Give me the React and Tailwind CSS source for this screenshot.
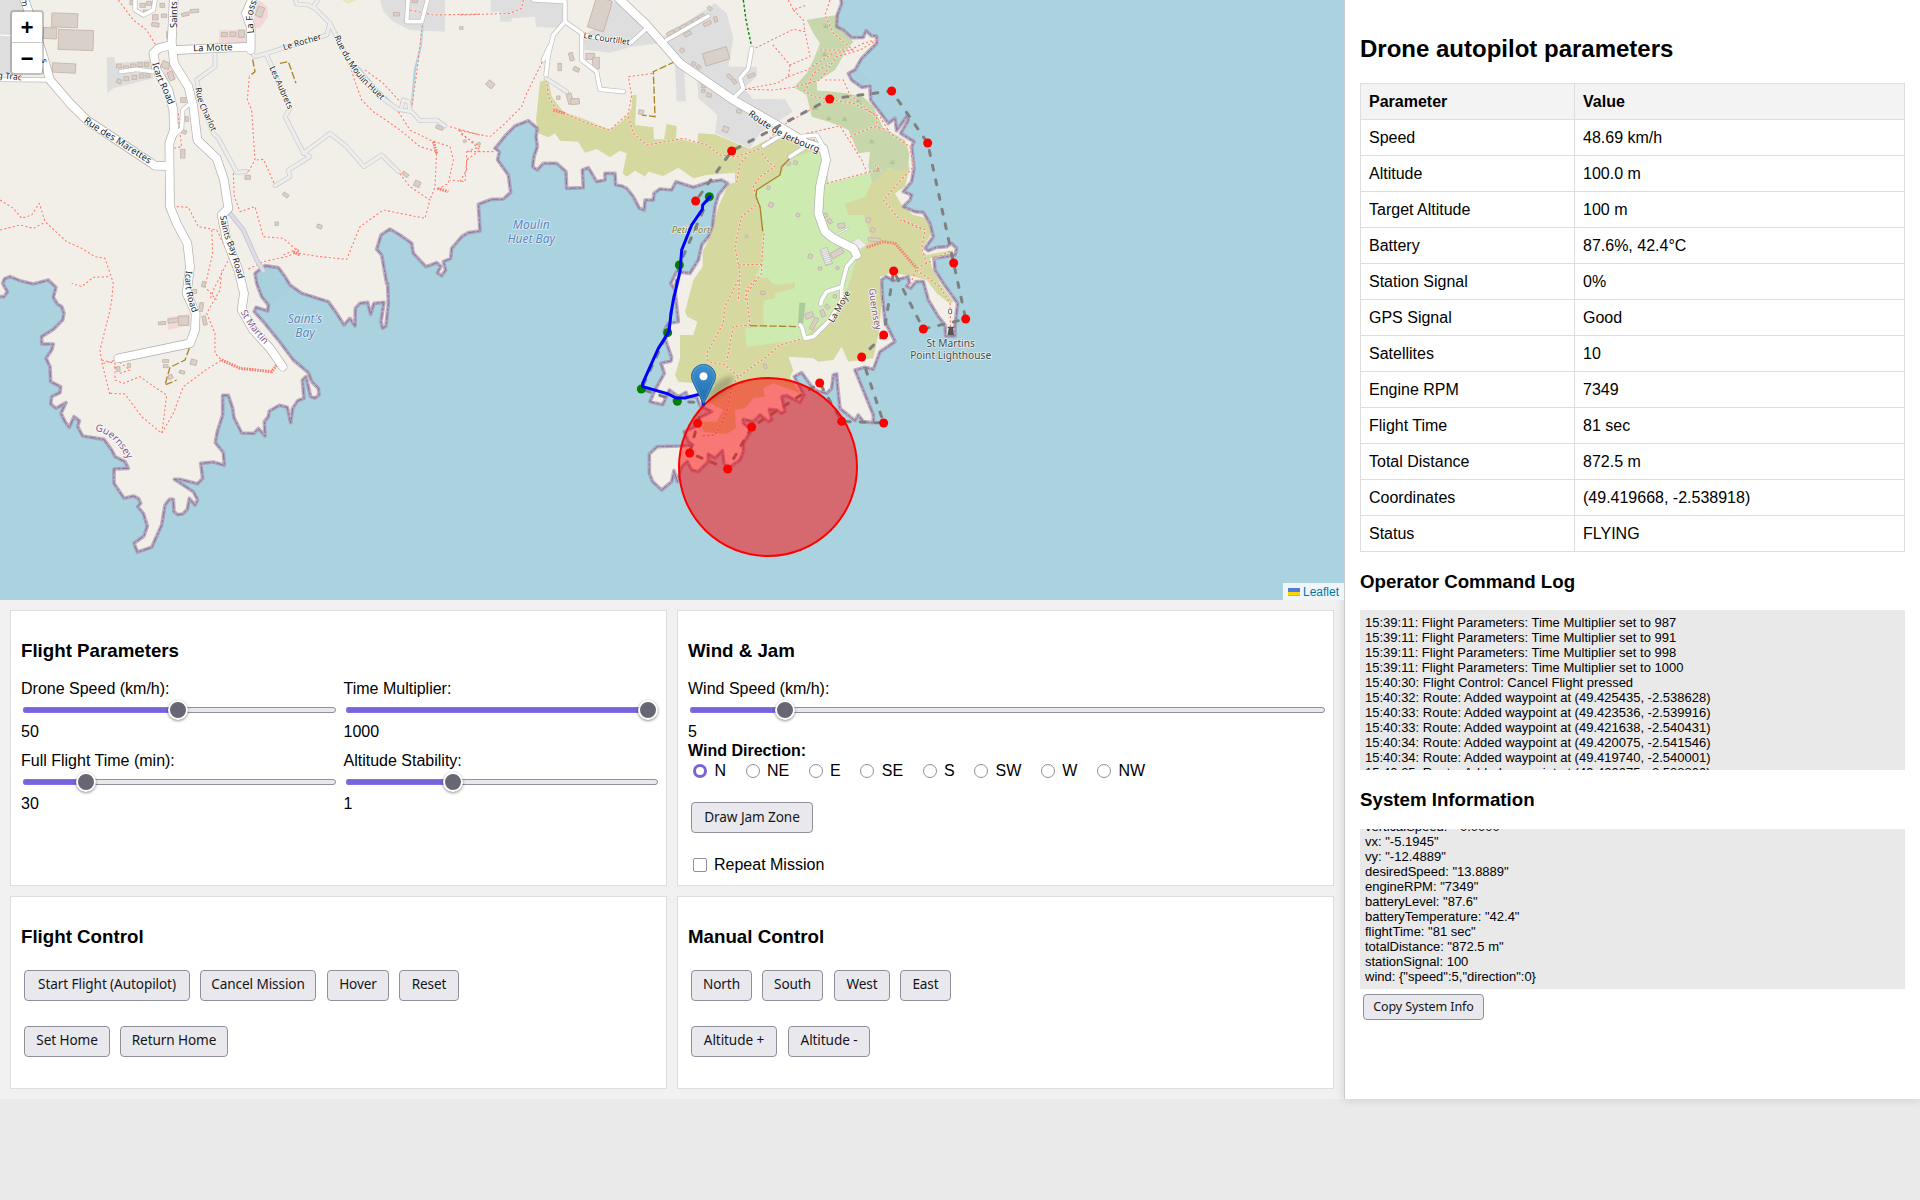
import React from "react";

/* Map geometry is stored in units of a third of a pixel, per survey sheet, each sheet with its own origin. */
const SHEETS = { a: [0, 0], b: [0, 810], c: [1380, 0], d: [1800, 840], e: [2340, 0] };

const toPoints = (src) => {
  const out = [];
  let o = SHEETS.a;
  src
    .trim()
    .split(/\s+/)
    .forEach((t) => {
      if (SHEETS[t]) {
        o = SHEETS[t];
        return;
      }
      const [x, y] = t.split(",").map(Number);
      out.push([x + o[0], y + o[1]]);
    });
  return out;
};
const line = (src) => "M" + toPoints(src).map((p) => p.join(" ")).join("L");
const area = (src) => line(src) + "Z";

const COAST = `b -20,80 12,80 22,65 8,40 14,26 30,20 60,32 100,42 145,30 168,52 160,82 172,102 185,110 192,130 188,150 160,178 125,200 125,222 160,222 155,240 138,265 150,290 152,335 182,350 180,368 155,380 152,402 168,415 198,398 183,430 195,455 208,472 222,440 238,452 233,470 248,498 312,508 335,540 345,560 375,575 385,595 342,597 342,640 372,685 400,678 415,685 422,700 413,710 430,730 442,768 432,798 402,820 412,846 455,832 485,765 495,705 508,688 520,688 522,725 533,734 548,732 562,718 568,685 585,705 593,690 580,665 523,628 540,628 593,641 608,625 602,580 640,576 673,586 670,548 646,518 652,485 668,435 668,376 685,376 698,415 702,443 725,489 762,490 775,475 795,498 793,455 805,440 808,423 838,406 862,412 872,458 878,415 893,392 912,385 907,330 918,320 932,380 945,384 957,375 955,355 935,335 925,308 880,270 835,210 790,155 763,125 768,112 803,123 805,105 785,80 770,40
a 765,820 795,797 835,803 855,830 870,855 b 905,70 985,95 1010,130 1032,165 1050,145 1065,168 1066,115 1080,100 1103,97 1112,133 1122,100 1152,97 1143,155 1148,175 1158,168 1165,100 1163,40
a 1160,850 1145,765 1130,748 1143,705 1170,687 1200,705 1235,730 1240,760 1278,800 1310,788 1323,800 1312,818 1325,827 1337,810 1330,785 1352,775 1355,745 1385,710
c 25,698 60,693 55,613 95,598 130,597 152,577 145,525 113,480 118,455 105,445 138,405 165,378 205,362 232,385 228,410 232,440 222,470 218,500 232,510 250,490 290,490 318,515 320,565 370,563 367,510 385,503 410,545 435,540 435,520 465,520 467,555 485,558 500,565 520,590 538,625 553,630 555,600 580,600 582,580 600,567 635,570 648,545 700,562 750,545 785,540 803,550 775,585 765,620 757,680 745,710 725,735 715,780 690,820 650,815 632,850
d 225,30 235,125 205,130 193,150 198,185 215,232 213,243 183,250 193,280 165,330 150,365 188,374 208,330 235,350 258,337 262,350 290,350 300,378 335,395 300,412 285,440 252,455 265,485 278,495 240,498 172,500 148,522 148,580 158,605 185,630 215,605 222,572 232,605 245,560 262,545 275,570 295,575 325,545 325,522 345,535 367,512 372,550 385,565 420,540 430,515 430,490 455,450 430,430 430,418 460,425 480,405 505,425 515,420 508,388 530,390 545,400 555,395 545,350 560,347 600,368 612,345 583,290 605,278 635,320 650,332 680,340 695,325 700,285 710,282 713,320 720,385 765,422 775,405 790,425 820,428 820,405 765,270 795,262 820,268 840,215 885,185 855,125 848,55
e 308,900 305,840 318,830 340,842 385,830 388,850 380,858 392,865 408,845 430,845 445,900 475,950 495,975 497,1008 525,1008 525,975 533,910 490,850 465,810 462,775 525,765 530,745 515,730 500,740 470,742 445,752 435,745 460,710 450,670 430,637 405,635 370,620 390,600 395,585 370,575 395,545 402,505 395,440 402,425 362,400 385,360 380,350 350,392 345,355 325,370 310,350 272,300 270,258 245,262 215,240 205,220 225,210 245,175 290,130 290,108 275,108 258,92 250,112 215,113 190,90 170,80 172,45 185,10 180,-20 a -20,-20`;

const HEATH = [
  `c 240,245 265,238 275,290 310,335 380,360 450,390 490,360 515,325 515,285 530,285 525,375 580,382 582,418 612,418 620,372 650,378 648,415 712,428 715,400 765,403 870,447 960,398 1040,440 1085,455 1140,560 1235,545
   e 280,540 325,505 350,515 390,500 375,560 345,580 365,615 400,645 440,655 455,700 425,750 440,765 520,750 515,762 450,775 455,800 480,850 520,905 510,912 470,880 440,840 385,826 330,820 300,830
   d 845,60 838,150 820,235 745,245 725,200 700,240 655,245 640,235 565,230 580,270 570,290 600,340 520,310 490,325 495,350 460,355 435,385 405,390 408,445 380,462 310,455 305,425 350,425 370,390 330,370 310,350 345,315 235,305 225,285 240,235 240,165 280,165 292,125 262,110 255,95 280,0
   c 728,800 728,755 745,720 775,620 805,552 825,548 825,518 740,525 700,535 655,503 610,528 565,515 555,530 525,512 500,530 488,520 500,460 480,452 450,472 410,447 375,458 355,425 300,422 285,400 265,412 235,400 228,360`,
];
const GOLF = `c 1050,455 1085,455 1105,550 1230,515 1235,545 1215,590 1155,612 1165,645 1210,645 1235,715 1200,755 1190,775 1165,860 d 680,120 600,180 440,200 435,145 490,138 490,62 525,55 527,12 c 935,850 925,835 885,830 910,780 912,700 895,610 890,570 960,525 985,480`;
const SCRUB = `e 80,60 170,45 175,80 220,125 200,150 165,210 110,245 112,270 200,280 250,290 280,320 310,385 375,420 388,460 385,505 350,515 325,505 290,540 275,545 265,500 270,455 235,460 205,390 185,380 145,365 95,350 80,285 42,262 80,220 100,180 120,130 100,100`;
const RESIDENTIAL = [
  `0,0 75,0 90,35 130,160 125,215 0,225`,
  `320,172 345,172 345,190 450,180 460,235 340,265 322,280`,
  `1140,0 1335,0 1335,95 1230,90 1180,65 1150,35`,
  `c 92,0 305,0 310,60 300,85 228,80 225,50 155,55 155,65 120,65 120,35 92,35`,
  `c 370,105 400,90 460,10 475,0 600,130 515,140 450,158 375,150`,
  `c 610,110 765,10 800,40 820,115 805,200 890,200 892,228 850,265 880,297 975,298 998,335 900,400 870,445 765,400 772,345 715,295 712,235 650,180`,
  `c 645,190 672,200 678,303 650,305`,
];
const PINK = [`658,90 740,90 740,130 658,130`, `765,0 785,5 802,22 804,50 780,85 762,85`, `b 502,142 570,132 570,165 504,180`, `487,205 510,190 530,235 500,240`];

const MAIN_ROADS = [
  `522,-20 515,130 522,190 565,260 580,320 592,420 650,475 672,540 685,625 665,645 680,720 715,810 732,880 725,930 760,990 810,1045 848,1100`,
  `515,135 475,145 460,160 470,210 505,270 520,330 522,390 508,430 510,620 530,670 562,730 570,800 560,880 587,940 585,990 570,1030 355,1075`,
  `530,150 750,140`,
  `752,150 752,80 738,40 765,-20`,
  `70,-10 95,60 130,170 150,240 210,310 260,360 440,480 465,497 505,498`,
  `c 465,-15 560,75 660,190 820,300 950,375 1040,430 1090,445 1098,480 1080,560 1075,640 1095,695 1120,715 1180,745 1190,765`,
];
const SMALL_ROADS = [
  `-10,238 150,240`, `565,315 548,330 545,385 520,410`, `362,215 410,208 460,215`, `405,0 405,30 430,45 460,30 465,0`, `1225,-10 1220,65 1265,65 1285,-10`,
  `c 220,0 315,5 315,65 280,105 265,165 258,225`, `c 250,180 268,140`, `c 315,65 365,100 365,180 410,215 420,268 490,275`, `c 365,105 510,130 560,85`,
  `c 620,120 745,48`, `c 875,145 865,205 840,235 850,265 815,300`, `c 910,438 980,395`, `c 990,470 1045,435`, `c 1020,410 1070,405 1090,440`,
  `c 1190,765 1160,800 1145,860 1100,875 1085,900 1082,912`, `c 1145,860 1145,900 1110,960 1060,1010 1035,1015 1025,980 1020,975`,
];
const LANES = [
  `750,150 765,170 800,160 980,105 990,70 940,20 960,-10`, `885,-5 890,12 925,15 945,25`, `800,165 870,325 855,350 910,458 930,470 865,510 870,530 825,557`,
  `910,460 990,400 1040,440 1092,500 1145,465 1195,515`, `645,155 645,200 590,240 605,310 640,400 655,415 710,517 738,515`,
  `990,70 1010,110 1060,210 1140,290 1195,328 1235,335 1260,362 1310,360 1335,378`, `1205,320 1210,300 1225,305 1230,330`, `c 258,235 320,275`,
];
const PATHS = [
  `355,0 400,60 440,90 470,140`, `0,600 40,625 65,655 95,645 118,610 135,665 200,725 245,745 285,770 315,775 340,850 335,900 b 330,120 300,240 305,275 330,375`,
  `0,690 60,675 100,685 130,670`, `b 325,20 280,22 245,50 215,40`, `b 305,270 345,280 345,330 370,340 420,320 455,345 500,375 485,495`, `b 310,280 350,270 390,300 360,310 340,285`,
  `b 330,370 375,372 425,440 485,490 520,430 550,350 620,298 665,270 645,250 645,190 620,130 660,60 665,0`,
  `530,620 565,622 595,680 650,690 690,770 640,870 630,900`, `635,690 638,760 615,860 650,900`, `535,340 540,400 545,440 520,445`,
  `748,230 742,300 755,330 765,480 745,515 700,520 703,590 720,635 765,620 790,710 850,715 895,755 860,770 790,785 740,810`, `770,480 790,478 825,555`,
  `850,765 895,745 895,760 960,770 1040,778 1080,680 1150,630 1275,655 1290,600 1230,560 1195,515`, `1040,160 1060,230 1085,300 1120,335 1200,390 1260,440 1310,455 1305,560 1290,600`,
  `1095,210 1150,250 1205,310`, `1195,335 1230,390 1290,420 1350,440 1360,480 1345,550 1310,570`, `1350,380 1440,405`, `1375,390 1440,450 1400,480 1395,545 1350,540`,
  `1230,30 1300,45 1440,42`, `1270,50 1250,220 1235,320`,
  `c 0,45 150,40 185,25 190,0`, `c 0,392 90,410 130,375 185,320 200,280 250,180`, `c 260,240 265,290 290,330 370,365 450,390 505,340 515,285 505,230 580,220`,
  `c 505,350 520,400 560,435 670,415 740,435 780,465 830,470 905,445 960,380 1110,297`, `c 0,545 20,510 20,455 105,455`, `c 20,455 60,440 0,400`,
  `c 905,460 930,490 945,500 900,530 880,560 895,610 845,650 840,670 825,740 840,820 835,900`, `c 830,548 840,490 860,470`, `c 835,795 905,793 912,700`, `c 905,793 905,820 860,880 855,900`,
  `d 415,0 375,80 370,130 320,220 325,245 375,255 415,290 500,230 540,195 600,178`, `d 465,0 438,30 450,135 400,140 390,190 380,245`, `d 415,290 395,320 380,400 345,465 305,468`,
  `c 875,150 935,120 1000,88 1035,95 1050,170 990,195 935,130`, `c 990,195 985,230 950,250 850,268 940,270 1000,262 1080,240 1130,170 1200,150 1250,120`,
  `c 1110,0 1095,45 1120,100 1180,150`, `c 985,0 1000,30 1040,15`, `c 1000,30 1030,60 1035,95`, `c 985,230 1040,210 1120,160 1180,150`, `c 1040,265 1060,220 1110,190`,
  `c 1030,270 1060,290 1180,310 1260,350 1290,400 1350,440 1360,500 1270,600 1320,660 1390,690`, `e 370,660 435,690 425,745 440,790 515,750`, `e 410,810 480,860 510,910 512,1000`,
  `e 140,550 270,515 300,510 285,495`, `e 80,400 180,378 245,480 260,515`, `e 210,410 280,380 330,390`, `e 135,240 190,240 210,285 290,350 290,380`, `e 440,790 410,805 390,855`, `e 120,150 210,150 250,130 285,120`,
];
const STEPS = [`b 665,270 720,295 815,305 830,285`, `e 260,742 310,725 345,730 410,805`, `c 280,330 315,340`, `1300,425 1310,460`, `1312,565 1345,575`, `c 1035,422 1065,422`, `880,755 900,765`];
const TRACKS = [`c 645,185 580,215 585,350 545,345`, `d 450,137 600,140`, `b 568,235 555,270 510,292 495,345 530,330`, `840,190 865,185 888,250`, `758,178 765,215 748,228`];

const BUILDINGS = [
  ["a", 155, 40, 78, 42, 2], ["a", 130, 83, 40, 33, 3], ["a", 175, 90, 105, 60, 2], ["a", 157, 190, 70, 28, 3], ["a", 570, 28, 26, 10, -4], ["a", 545, 38, 22, 10, -12],
  ["a", 350, 192, 14, 12, 0], ["a", 370, 198, 16, 12, 0], ["a", 392, 192, 16, 12, 0], ["a", 414, 188, 14, 12, 0], ["a", 434, 188, 12, 12, 0], ["a", 372, 230, 14, 12, 0], ["a", 396, 226, 14, 12, 0], ["a", 418, 222, 14, 12, 0], ["a", 350, 238, 14, 12, 20], ["a", 438, 220, 12, 12, 0],
  ["a", 420, 10, 16, 12, 0], ["a", 440, 4, 14, 12, 0], ["a", 430, 30, 14, 12, 0], ["a", 458, 44, 16, 16, 0], ["a", 480, 10, 14, 12, 0], ["a", 455, 68, 22, 12, 10], ["a", 484, 42, 16, 10, 0], ["a", 500, 95, 12, 20, 0], ["a", 390, 2, 10, 12, 0],
  ["a", 664, 98, 18, 12, 0], ["a", 690, 96, 18, 14, 0], ["a", 715, 90, 18, 22, 0], ["a", 770, 20, 20, 30, 20], ["a", 485, 185, 24, 20, 20], ["a", 505, 215, 16, 26, -20], ["a", 542, 293, 16, 14, 0], ["a", 556, 350, 9, 14, 0], ["a", 545, 390, 14, 11, 20], ["a", 542, 448, 13, 26, 0],
  ["a", 735, 526, 16, 12, 0], ["a", 848, 580, 18, 10, 35], ["a", 825, 666, 10, 10, 0], ["a", 951, 674, 15, 11, 20], ["a", 1206, 518, 20, 10, 35], ["a", 1243, 543, 18, 17, 25], ["a", 1180, 38, 18, 10, 0], ["a", 1236, 0, 16, 8, 0], ["a", 1379, 80, 10, 8, 0], ["a", 1308, 378, 22, 10, 20], ["a", 606, 845, 10, 16, 15], ["a", 575, 868, 15, 12, 0],
  ["b", 475, 155, 22, 9, -5], ["b", 504, 145, 40, 12, -8], ["b", 536, 138, 30, 28, 0], ["b", 598, 98, 11, 26, 10], ["b", 608, 138, 11, 27, -12], ["b", 488, 269, 18, 8, 0], ["b", 490, 284, 14, 9, 0], ["b", 572, 269, 18, 16, 15], ["b", 538, 302, 16, 9, 15], ["b", 504, 315, 14, 12, -30], ["b", 350, 290, 10, 14, 0], ["b", 383, 280, 8, 12, 0],
  ["c", 395, -5, 50, 95, 17], ["c", 378, 160, 26, 18, 0], ["c", 398, 172, 20, 34, 0], ["c", 294, 190, 10, 22, 0], ["c", 328, 158, 12, 24, -15], ["c", 340, 202, 18, 12, 25], ["c", 290, 288, 10, 10, 0], ["c", 322, 280, 15, 32, -15], ["c", 332, 296, 26, 17, -5], ["c", 80, 244, 22, 18, 40],
  ["c", 620, 94, 22, 11, -30], ["c", 642, 84, 18, 12, -30], ["c", 660, 75, 18, 12, -30], ["c", 680, 65, 18, 12, -30], ["c", 698, 54, 18, 12, -30], ["c", 716, 44, 18, 12, -30], ["c", 742, 20, 14, 10, 45], ["c", 762, 50, 10, 16, -15], ["c", 730, 66, 24, 10, -25], ["c", 672, 96, 22, 11, -25], ["c", 660, 145, 12, 12, 35],
  ["c", 731, 150, 75, 38, -17], ["c", 695, 186, 12, 10, 35], ["c", 710, 196, 12, 10, 35], ["c", 800, 225, 18, 10, 40], ["c", 816, 240, 14, 10, 60], ["c", 863, 222, 22, 9, -25], ["c", 725, 254, 12, 9, 10], ["c", 725, 268, 10, 9, 10], ["c", 740, 280, 14, 11, 15], ["c", 788, 380, 17, 16, 20], ["c", 830, 328, 14, 11, 15], ["c", 536, 330, 15, 13, 10], ["c", 10, 420, 9, 7, -20], ["c", 52, 428, 9, 7, -20],
  ["c", 980, 486, 11, 10, 20], ["c", 1001, 483, 11, 10, 20], ["c", 921, 558, 9, 10, 20], ["c", 926, 608, 13, 13, 20], ["c", 1009, 640, 10, 10, 20], ["c", 1090, 640, 12, 12, -20], ["c", 1104, 656, 11, 15, -30], ["c", 1134, 670, 20, 14, -10], ["c", 1218, 654, 13, 13, 20], ["c", 1232, 684, 12, 12, 20], ["c", 1225, 714, 36, 10, 5], ["c", 1112, 750, 38, 18, -30], ["c", 1045, 763, 12, 12, 20], ["c", 1075, 801, 10, 9, 20], ["c", 1128, 800, 9, 8, 20], ["c", 856, 705, 8, 8, 20], ["c", 903, 874, 11, 9, 0],
  ["d", 616, 98, 24, 16, -20], ["d", 636, 112, 12, 38, 28], ["d", 662, 90, 12, 20, -20], ["d", 675, 75, 14, 10, 50], ["d", 700, 44, 10, 10, 20], ["d", 492, 252, 8, 14, -20], ["d", 483, 34, 12, 8, 0],
];

const LABELS = [
  { id: "l1", d: "M250 366L300 400L360 436L480 514", t: "Rue des Marettes", s: 28.5 },
  { id: "l2", d: "M580 154L720 150", t: "La Motte", s: 28.5 },
  { id: "l3", d: "M852 151L1000 107", t: "Le Rocher", s: 25.5 },
  { id: "l4", d: "M1003 110Q1030 180 1085 245L1160 316", t: "Rue du Moulin Huet", s: 25.5 },
  { id: "l5", d: "M808 203L875 353", t: "Les Aubrets", s: 25 },
  { id: "l6", d: "M586 264Q592 310 612 345L650 430", t: "Rue Charlot", s: 25.5 },
  { id: "l7", d: "M457 190Q468 240 490 275L520 350", t: "Icart Road", s: 28 },
  { id: "l8", d: "M660 648Q668 705 690 750L730 890", t: "Saints Bay Road", s: 26.5 },
  { id: "l9", d: "M558 812Q545 880 600 990", t: "Icart Road", s: 27 },
  { id: "l10", d: "M532 84L532 -120", t: "Saints Road", s: 28.5 },
  { id: "l11", d: "M762 100L758 50Q762 10 800 -50", t: "La Fosse", s: 28.5 },
  { id: "l12", d: "M-8 234L120 246", t: "g Trac", s: 26 },
  { id: "l13", d: "M1750 114L1930 141", t: "Le Courtillet", s: 24.5 },
  { id: "l14", d: "M2243 345Q2330 410 2400 436L2500 476", t: "Route de Jerbourg", s: 28 },
  { id: "l15", d: "M2500 970L2560 865", t: "La Moye", s: 27 },
];
const PURPLE_LABELS = [
  { id: "p1", d: "M285 1293Q340 1296 395 1400", t: "Guernsey", s: 30 },
  { id: "p2", d: "M722 935Q745 990 830 1070", t: "St Martin", s: 28.5 },
  { id: "p3", d: "M2608 866Q2610 930 2634 1020", t: "Guernsey", s: 28.5 },
];

const PLAN = `c 748,590 658,795 d 203,158 124,327 232,364 310,368 293,430 269,519 383,567 455,441 659,309 725,424 851,429 785,231 851,165 881,-27 970,147 1097,117 e 521,789 443,429 335,273 149,297 c 815,453 707,603`;
const FLOWN = `c 750,590 728,615 727,628 695,675 665,750 660,815 640,900 d 213,100 207,155 175,205 128,310 128,320 205,342 228,354 255,354 305,341 310,372`;
const REACHED = `c 748,590 658,795 d 203,158 124,327 232,364`;
const PENDING = `d 293,430 269,519 383,567 455,441 659,309 725,424 851,429 785,231 851,165 881,-27 970,147 1097,117 e 521,789 443,429 335,273 149,297 c 815,453 707,603`;
const TUFTS = `e 137,78 107,324 146,355 194,357 235,302 275,424 337,487 134,163 292,510`;

function RoadLabel({ items, fill }) {
  return items.map((l) => (
    <g key={l.id}>
      <path id={l.id} d={l.d} fill="none" />
      <text fontSize={l.s} fill={fill} stroke="#fff" strokeWidth="5" strokeOpacity=".8" paintOrder="stroke" strokeLinejoin="round">
        <textPath href={"#" + l.id}>{l.t}</textPath>
      </text>
    </g>
  ));
}

function MapCanvas() {
  const stroke = { fill: "none", strokeLinejoin: "round", strokeLinecap: "round" };
  return (
    <svg className="block h-[600px] w-[1344px] font-['Noto_Sans',sans-serif]" viewBox="0 0 4032 1800">
      <defs>
        <clipPath id="land"><path d={area(COAST)} /></clipPath>
        <pattern id="shingle" width="10" height="10" patternUnits="userSpaceOnUse">
          <circle cx="2.5" cy="3" r="1.3" fill="#8fb9c6" /><circle cx="7.5" cy="8" r="1.3" fill="#8fb9c6" />
        </pattern>
        <linearGradient id="pin" x1="0" y1="0" x2="0" y2="1">
          <stop offset="0" stopColor="#3f92cf" /><stop offset="1" stopColor="#1b6cb0" />
        </linearGradient>
        <filter id="soft" x="-30%" y="-30%" width="160%" height="160%"><feGaussianBlur stdDeviation="8" /></filter>
      </defs>
      <rect width="4032" height="1800" fill="#aad3df" />
      <path d={area(COAST)} fill="#f2efe9" />
      <g clipPath="url(#land)">
        {RESIDENTIAL.map((r) => <path key={r} d={area(r)} fill="#dedede" />)}
        {PINK.map((r) => <path key={r} d={area(r)} fill="#f2d9d8" />)}
        <path d="M1025 0L1045 12L1070 0Z" fill="#e3ebc0" />
        {HEATH.map((h) => <path key={h} d={area(h)} fill="#d6d99f" />)}
        <path d={area(GOLF)} fill="#cdebb0" />
        <path d={area(`c 945,855 1005,848 1005,865 945,880`)} fill="#d6d99f" />
        <path d={area(`d 598,68 616,68 610,130 594,130`)} fill="#aacc9c" />
        <path d={area(`c 1095,455 1150,380 1190,440 1220,515 1105,550`)} fill="#f2efe9" />
        <path d={area(SCRUB)} fill="#c8d7ab" />
        <path d={area(`e 112,245 170,210 205,230 260,262 275,300 200,272 112,272`)} fill="#f2efe9" />
      </g>
      <path d={area(`770,820 795,800 835,806 870,855 862,880 810,920 785,890`)} fill="url(#shingle)" />
      <path d={area(`c 1180,220 1200,205 1225,240 1205,255`)} fill="url(#shingle)" />
      <path d={area(COAST)} {...stroke} stroke="#a08aaa" strokeOpacity=".65" strokeWidth="11" />
      <path d={area(COAST)} {...stroke} strokeLinecap="butt" stroke="#8d6592" strokeOpacity=".85" strokeWidth="3" strokeDasharray="22 5 8 5" />
      <path d={line(`1270,50 1262,140 1245,210 1235,320`)} {...stroke} stroke="#aad3df" strokeWidth="7" />
      <path d={line(`1075,200 1130,265 1195,328`)} {...stroke} stroke="#aad3df" strokeWidth="4" />
      <path d={line(`0,105 40,108`)} {...stroke} stroke="#fff" strokeWidth="3" />
      {PATHS.map((p) => <path key={p} d={line(p)} {...stroke} stroke="#fff" strokeOpacity=".3" strokeWidth="7" />)}
      {PATHS.map((p) => <path key={p} d={line(p)} {...stroke} strokeLinecap="butt" stroke="#fa8072" strokeWidth="3.4" strokeDasharray="7 6" />)}
      {STEPS.map((p) => <path key={p} d={line(p)} fill="none" stroke="#fa8072" strokeWidth="9" strokeDasharray="5 3" />)}
      {TRACKS.map((p) => <path key={p} d={line(p)} fill="none" stroke="#ac8327" strokeWidth="4" strokeDasharray="22 7" />)}
      <path d={line(`c 990,475 965,500 960,525 890,570 888,590 900,620 908,692`)} {...stroke} stroke="#ac8327" strokeWidth="4" />
      <path d={line(`c 850,0 858,60 875,140`)} fill="none" stroke="#008000" strokeWidth="4" strokeDasharray="8 6" />
      {BUILDINGS.map(([s, x, y, w, h, r]) => {
        const px = x + SHEETS[s][0];
        const py = y + SHEETS[s][1];
        return <rect key={s + x + "," + y} x={px} y={py} width={w} height={h} transform={`rotate(${r} ${px + w / 2} ${py + h / 2})`} fill="#d9d0c9" stroke="#c4b3a7" strokeWidth="2.5" />;
      })}
      {LANES.map((p) => <path key={p} d={line(p)} {...stroke} stroke="#c9c9c9" strokeWidth="14" />)}
      {LANES.map((p) => <path key={p} d={line(p)} {...stroke} stroke="#ededed" strokeWidth="10" />)}
      <path d={line(`690,640 730,690 770,780 790,812`)} {...stroke} stroke="#bdbcc8" strokeWidth="14" />
      <path d={line(`690,640 730,690 770,780 790,812`)} {...stroke} stroke="#dddce8" strokeWidth="10" />
      <path d={line(`c 1090,745 1108,795`)} stroke="#bbb" strokeWidth="24" />
      <path d={line(`c 1091,747 1107,793`)} stroke="#eee" strokeWidth="19" strokeDasharray="4 2" />
      <path d={line(`c 1120,708 1168,683`)} stroke="#bbb" strokeWidth="7" />
      <path d={line(`c 1120,708 1167,684`)} stroke="#f6f6f6" strokeWidth="4" />
      <path d={area(`c 1175,728 1195,714 1220,736 1200,748`)} fill="#ececec" stroke="#ccc" strokeWidth="2" />
      {SMALL_ROADS.map((p) => <path key={p} d={line(p)} {...stroke} stroke="#bdbdbd" strokeWidth="15" />)}
      {MAIN_ROADS.map((p) => <path key={p} d={line(p)} {...stroke} stroke="#adadad" strokeWidth="28" />)}
      {SMALL_ROADS.map((p) => <path key={p} d={line(p)} {...stroke} stroke="#fff" strokeWidth="11" />)}
      {MAIN_ROADS.map((p) => <path key={p} d={line(p)} {...stroke} stroke="#fff" strokeWidth="24" />)}
      {toPoints(TUFTS).map(([x, y]) => (
        <path key={x + "," + y} d={`M${x - 8} ${y + 4}H${x + 8}M${x} ${y + 4}V${y - 7}M${x - 2} ${y + 4}L${x - 6} ${y - 4}M${x + 2} ${y + 4}L${x + 6} ${y - 4}`} stroke="#9fb98a" strokeWidth="2" fill="none" />
      ))}

      <RoadLabel items={LABELS} fill="#1c1c1c" />
      <RoadLabel items={PURPLE_LABELS} fill="#7d5590" />
      <g fill="#222" fontSize="26">
        <text transform="translate(64 -4) rotate(82)">m</text>
        <text transform="translate(124 178) rotate(80)">s</text>
      </g>
      <g fontStyle="italic" textAnchor="middle" stroke="#fff" strokeOpacity=".6" strokeWidth="5" paintOrder="stroke" strokeLinejoin="round">
        <g fill="#5b84bd" fontSize="36">
          <text x="915" y="969">Saint's</text><text x="915" y="1012">Bay</text>
          <text x="1594" y="686">Moulin</text><text x="1594" y="730">Huet Bay</text>
        </g>
        <text x="2073" y="699" fontSize="28" fill="#857626">Petit Port</text>
      </g>
      <g fontSize="30.5" textAnchor="middle" fill="#484848" stroke="#fff" strokeOpacity=".6" strokeWidth="5" paintOrder="stroke" strokeLinejoin="round">
        <text x="2852" y="1041">St Martins</text><text x="2852" y="1078">Point Lighthouse</text>
      </g>
      <path d="M2843 1006L2846 984H2843V980H2862V984H2859L2862 1006Z" fill="#555" />
      <rect x="2846" y="928" width="9" height="13" rx="2" fill="#fff" stroke="#555" strokeWidth="2.5" />

      <path d={line(PLAN)} {...stroke} stroke="#808080" strokeWidth="9" strokeDasharray="15 30" />
      <circle cx="2304" cy="1401" r="267" fill="#ff0000" fillOpacity=".5" stroke="#ff0000" strokeWidth="6" />
      {toPoints(REACHED).map(([x, y]) => <circle key={x} cx={x} cy={y} r="13.5" fill="#008000" />)}
      {toPoints(PENDING).map(([x, y]) => <circle key={x + "," + y} cx={x} cy={y} r="13.5" fill="#ff0000" />)}
      {toPoints(PENDING).map(([x, y]) => <circle key={x + "," + y} cx={x} cy={y} r="4" fill="#e60f0f" />)}
      <path d={line(FLOWN)} {...stroke} stroke="#0000ff" strokeWidth="9" />
      <path d="M2112 1208C2125 1170 2150 1135 2195 1128C2215 1142 2175 1180 2112 1210Z" fill="#000" opacity=".22" filter="url(#soft)" />
      <g transform="translate(2073 1092) scale(3)">
        <path d="M12.5.5C5.9.5.5 5.9.5 12.4c0 2.2.6 4.2 1.7 6.3L12.5 40.2 22.8 18.7c1.1-2.1 1.7-4.1 1.7-6.3C24.500 5.9 19.100.5 12.500.5Z" fill="url(#pin)" stroke="#2569a0" />
        <path d="M12.500 1.600C6.500 1.600 1.600 6.500 1.600 12.400c0 2 .5 3.800 1.600 5.800L12.500 37.600l9.300-19.400c1.100-2 1.600-3.800 1.600-5.800C23.400 6.500 18.500 1.600 12.500 1.600Z" fill="none" stroke="#fff" strokeOpacity=".15" />
        <circle cx="12.500" cy="12.300" r="4.500" fill="#fff" stroke="#2b6da3" strokeWidth=".8" />
      </g>
    </svg>
  );
}

const SANS = "font-['Liberation_Sans',Arial,sans-serif]";

function ZoomControl() {
  return (
    <div className="absolute left-[10px] top-[10px] w-[34px] rounded border-2 border-black/20 bg-clip-padding text-center font-['Liberation_Mono',monospace] text-[22px] font-bold leading-[36px] text-black">
      <div className="h-[31px] rounded-t-[2px] border-b border-[#ccc] bg-white">+</div>
      <div className="h-[30px] rounded-b-[2px] bg-white">−</div>
    </div>
  );
}

function Attribution() {
  return (
    <div className="absolute bottom-0 right-0 flex h-[17px] items-center gap-[3px] bg-white/80 px-[5px] text-[12px] leading-[17px] text-[#0078a8]">
      <svg className="mt-px h-2 w-3" viewBox="0 0 12 8"><path fill="#4C7BE1" d="M0 0h12v4H0z" /><path fill="#FFD500" d="M0 4h12v3H0z" /><path fill="#E0BC00" d="M0 7h12v1H0z" /></svg>
      <span className="mt-[2px]">Leaflet</span>
    </div>
  );
}

function Slider({ at }) {
  return (
    <div className="relative mx-[2px] flex h-6 w-full shrink-0 items-center">
      <div className="h-[6px] w-full overflow-hidden rounded-[3px] border border-[#8f8f9d] bg-[#e9e9ed]" />
      <div className="absolute left-0 h-[6px] rounded-l-[3px] border border-r-0 border-[#8470ec] bg-[#7764d8]" style={{ width: at }} />
      <div className="absolute h-5 w-5 rounded-full border-2 border-white bg-[#676774] shadow-[0_1px_3px_rgba(0,0,0,0.45)]" style={{ left: at - 10 }} />
    </div>
  );
}

function Field({ label, value, at }) {
  return (
    <div className="h-[72px] pt-px leading-[18px]">
      <div>{label}</div>
      <Slider at={at} />
      <div className="mt-px">{value}</div>
    </div>
  );
}

function Button({ children, className }) {
  return (
    <button className={"flex h-[31px] items-center justify-center whitespace-nowrap rounded border border-[#8f8f9d] bg-[#e9e9ed] pb-px font-['Noto_Sans',sans-serif] text-[13.600px] tracking-[-0.1px] text-[#15141a] " + className}>
      {children}
    </button>
  );
}

function Panel({ title, className = "", children }) {
  return (
    <section className={"border border-[#ddd] bg-white px-[10px] pt-[28.700px] " + className}>
      <h3 className="mb-[18.700px] text-[18.720px] font-bold leading-[21px]">{title}</h3>
      {children}
    </section>
  );
}

const ROWS = [
  ["Speed", "48.69 km/h"], ["Altitude", "100.0 m"], ["Target Altitude", "100 m"], ["Battery", "87.6%, 42.4°C"], ["Station Signal", "0%"], ["GPS Signal", "Good"],
  ["Satellites", "10"], ["Engine RPM", "7349"], ["Flight Time", "81 sec"], ["Total Distance", "872.5 m"], ["Coordinates", "(49.419668, -2.538918)"], ["Status", "FLYING"],
];
const LOG = [
  "15:39:11: Flight Parameters: Time Multiplier set to 987", "15:39:11: Flight Parameters: Time Multiplier set to 991", "15:39:11: Flight Parameters: Time Multiplier set to 998",
  "15:39:11: Flight Parameters: Time Multiplier set to 1000", "15:40:30: Flight Control: Cancel Flight pressed", "15:40:32: Route: Added waypoint at (49.425435, -2.538628)",
  "15:40:33: Route: Added waypoint at (49.423536, -2.539916)", "15:40:33: Route: Added waypoint at (49.421638, -2.540431)", "15:40:34: Route: Added waypoint at (49.420075, -2.541546)",
  "15:40:34: Route: Added waypoint at (49.419740, -2.540001)", "15:40:35: Route: Added waypoint at (49.420075, -2.538800)",
];
const SYSTEM = [
  'verticalSpeed: "-0.0000"', 'vx: "-5.1945"', 'vy: "-12.4889"', 'desiredSpeed: "13.8889"', 'engineRPM: "7349"', 'batteryLevel: "87.6"', 'batteryTemperature: "42.4"',
  'flightTime: "81 sec"', 'totalDistance: "872.5 m"', "stationSignal: 100", 'wind: {"speed":5,"direction":0}',
];

export default function App() {
  return (
    <div className={"min-h-[1200px] w-[1920px] bg-[#eaeaea] text-[16px] text-black " + SANS}>
      <div className="flex h-[1099px]">
        <div className="flex w-[1344px] shrink-0 flex-col bg-[#f1f1f1]">
          <div className="relative z-10 h-[600px] overflow-hidden">
            <MapCanvas />
            <ZoomControl />
            <Attribution />
          </div>
          <div className="grid grid-cols-2 grid-rows-[276px_193px] gap-[10px] p-[10px]">
            <Panel title="Flight Parameters">
              <div className="grid grid-cols-2 gap-x-[10px]">
                <Field label="Drone Speed (km/h):" value="50" at={155} />
                <Field label="Time Multiplier:" value="1000" at={302.5} />
                <Field label="Full Flight Time (min):" value="30" at={63} />
                <Field label="Altitude Stability:" value="1" at={107} />
              </div>
            </Panel>
            <Panel title="Wind & Jam">
              <div className="pt-px leading-[18px]">
                <div>Wind Speed (km/h):</div>
                <Slider at={95} />
                <div className="mt-px">5</div>
                <div className="mt-px font-bold">Wind Direction:</div>
                <div className="mt-px flex h-5 items-center gap-[19.500px] pl-[5px]">
                  {["N", "NE", "E", "SE", "S", "SW", "W", "NW"].map((d) => (
                    <label key={d} className="flex items-center gap-[7.450px]">
                      <span className={d === "N" ? "h-[14px] w-[14px] rounded-full border-[3px] border-[#7764d8] bg-white" : "h-[14px] w-[14px] rounded-full border border-[#8f8f9d] bg-white"} />
                      <span>{d}</span>
                    </label>
                  ))}
                </div>
              </div>
              <Button className="ml-[3px] mt-[21px] w-[122px]">Draw Jam Zone</Button>
              <label className="ml-[5px] mt-[23px] flex h-[18px] items-center gap-[7px]">
                <span className="h-[14px] w-[14px] rounded-[2px] border border-[#8f8f9d] bg-white" />
                <span>Repeat Mission</span>
              </label>
            </Panel>
            <Panel title="Flight Control">
              <div className="ml-[3px] mt-[23px] flex gap-[10px]">
                <Button className="w-[166px]">Start Flight (Autopilot)</Button>
                <Button className="w-[116px]">Cancel Mission</Button>
                <Button className="ml-px w-[62px]">Hover</Button>
                <Button className="w-[60px]">Reset</Button>
              </div>
              <div className="ml-[3px] mt-[25px] flex gap-[10px]">
                <Button className="w-[86px]">Set Home</Button>
                <Button className="w-[108px]">Return Home</Button>
              </div>
            </Panel>
            <Panel title="Manual Control">
              <div className="ml-[3px] mt-[23px] flex gap-[10px]">
                <Button className="w-[61px]">North</Button>
                <Button className="w-[61px]">South</Button>
                <Button className="ml-px w-[56px]">West</Button>
                <Button className="w-[51px]">East</Button>
              </div>
              <div className="ml-[3px] mt-[25px] flex gap-[11px]">
                <Button className="w-[86px]">Altitude +</Button>
                <Button className="w-[82px]">Altitude -</Button>
              </div>
            </Panel>
          </div>
        </div>
        <aside className="w-[576px] border-l border-[#ccc] bg-white px-[15px] pt-[35px] shadow-[0_0_10px_rgba(0,0,0,0.15)]">
          <h2 className="mb-[21px] text-[24px] font-bold leading-[27px]">Drone autopilot parameters</h2>
          <table className="h-[469px] w-full table-fixed border-collapse text-left leading-[19px]">
            <thead>
              <tr className="h-9 bg-[#f3f3f3]">
                <th className="w-[214px] border border-[#ddd] px-2">Parameter</th>
                <th className="border border-[#ddd] px-2">Value</th>
              </tr>
            </thead>
            <tbody>
              {ROWS.map(([k, v]) => (
                <tr key={k} className="h-9">
                  <td className="border border-[#ddd] px-2">{k}</td>
                  <td className="border border-[#ddd] px-2">{v}</td>
                </tr>
              ))}
            </tbody>
          </table>
          <h3 className="mb-[18px] mt-[19px] text-[18.720px] font-bold leading-[21px]">Operator Command Log</h3>
          <div className="h-40 overflow-hidden bg-[#e9e9e9] p-[5px] text-[13px] leading-[15px]">
            {LOG.map((l) => <div key={l}>{l}</div>)}
          </div>
          <h3 className="mb-[19px] mt-[19px] text-[18.720px] font-bold leading-[21px]">System Information</h3>
          <div className="flex h-40 flex-col justify-end overflow-hidden bg-[#e9e9e9] p-[5px] text-[13px] leading-[15px]">
            {SYSTEM.map((l) => <div key={l} className="shrink-0">{l}</div>)}
          </div>
          <Button className="ml-[3px] mt-[5px] h-[26px]! w-[121px] pb-0! text-[12.500px]!">Copy System Info</Button>
        </aside>
      </div>
    </div>
  );
}
